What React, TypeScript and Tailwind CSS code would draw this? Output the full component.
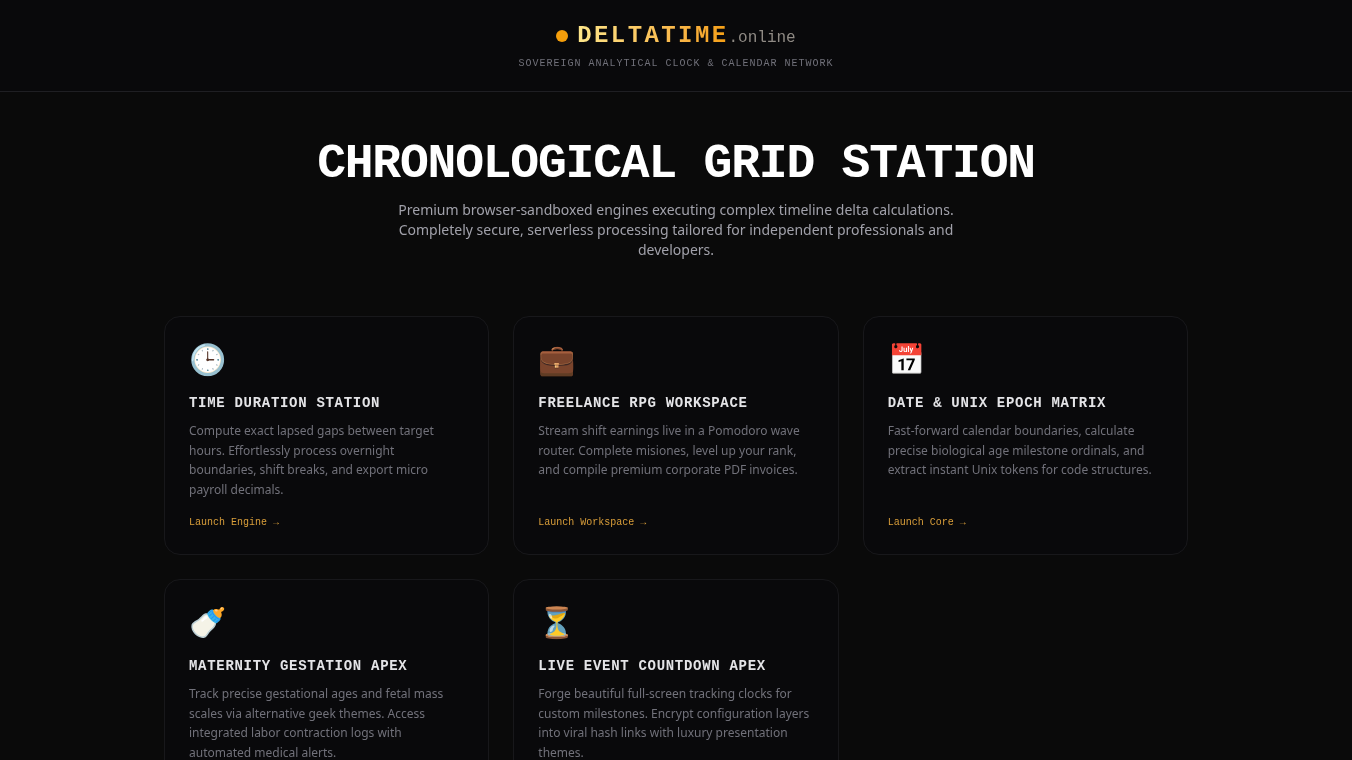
import React from 'react'

const cards = [
  {
    icon: '🕒',
    title: 'TIME DURATION STATION',
    text: 'Compute exact lapsed gaps between target hours. Effortlessly process overnight boundaries, shift breaks, and export micro payroll decimals.',
    link: 'Launch Engine →'
  },
  {
    icon: '💼',
    title: 'FREELANCE RPG WORKSPACE',
    text: 'Stream shift earnings live in a Pomodoro wave router. Complete misiones, level up your rank, and compile premium corporate PDF invoices.',
    link: 'Launch Workspace →'
  },
  {
    icon: '📅',
    title: 'DATE & UNIX EPOCH MATRIX',
    text: 'Fast-forward calendar boundaries, calculate precise biological age milestone ordinals, and extract instant Unix tokens for code structures.',
    link: 'Launch Core →'
  },
  {
    icon: '🍼',
    title: 'MATERNITY GESTATION APEX',
    text: 'Track precise gestational ages and fetal mass scales via alternative geek themes. Access integrated labor contraction logs with automated medical alerts.',
    link: 'Launch Apex →'
  },
  {
    icon: '⏳',
    title: 'LIVE EVENT COUNTDOWN APEX',
    text: 'Forge beautiful full-screen tracking clocks for custom milestones. Encrypt configuration layers into viral hash links with luxury presentation themes.',
    link: 'Launch Countdown →'
  }
]

const mono = 'font-mono'

const App: React.FC = () => {
  return (
    <div className="min-h-screen bg-[#0a0a0a] font-['Noto_Sans',sans-serif] text-white opacity-[0.999]">
      {/* Header */}
      <header className="h-[92px] border-b border-[#1f1f23] bg-[#09090b] pt-5 text-center">
        <div className="flex items-center justify-center gap-[9px]">
          <span className="h-3 w-3 rounded-full bg-[#f59e0b]" />
          <div className={`${mono} flex items-baseline`}>
            <span className="bg-gradient-to-r from-[#fde68a] to-[#f59e0b] bg-clip-text text-2xl font-bold tracking-[0.1em] text-transparent">
              DELTATIME
            </span>
            <span className="text-base text-[#8f8a84]">.online</span>
          </div>
        </div>
        <p className={`${mono} mt-1 text-[10px] leading-[15px] tracking-[0.1em] text-[#71717a]`}>
          SOVEREIGN ANALYTICAL CLOCK &amp; CALENDAR NETWORK
        </p>
      </header>

      {/* Hero */}
      <section className="pt-12 text-center">
        <h1 className={`${mono} text-5xl font-bold tracking-tight text-white`}>
          CHRONOLOGICAL GRID STATION
        </h1>
        <p className="mx-auto mt-3 max-w-xl text-sm leading-5 text-[#a1a1aa]">
          Premium browser-sandboxed engines executing complex timeline delta calculations. Completely secure, serverless processing tailored for independent professionals and developers.
        </p>
      </section>

      {/* Cards */}
      <main className="mx-auto mt-14 grid max-w-5xl grid-cols-3 gap-6 pb-12">
        {cards.map(card => (
          <div key={card.title} className="flex h-[239px] flex-col rounded-2xl border border-[#18181b] bg-[#09090b] p-6">
            <div className="text-3xl leading-9">{card.icon}</div>
            <h2 className={`${mono} mt-4 text-sm leading-5 font-bold tracking-[0.05em] text-[#e4e4e7]`}>
              {card.title}
            </h2>
            <p className="mt-2 text-xs leading-[19.5px] text-[#71717a]">{card.text}</p>
            <a className={`${mono} mt-auto text-[10px] leading-[15px] text-[#d99e3a]`}>{card.link}</a>
          </div>
        ))}
      </main>
    </div>
  )
}

export default App
